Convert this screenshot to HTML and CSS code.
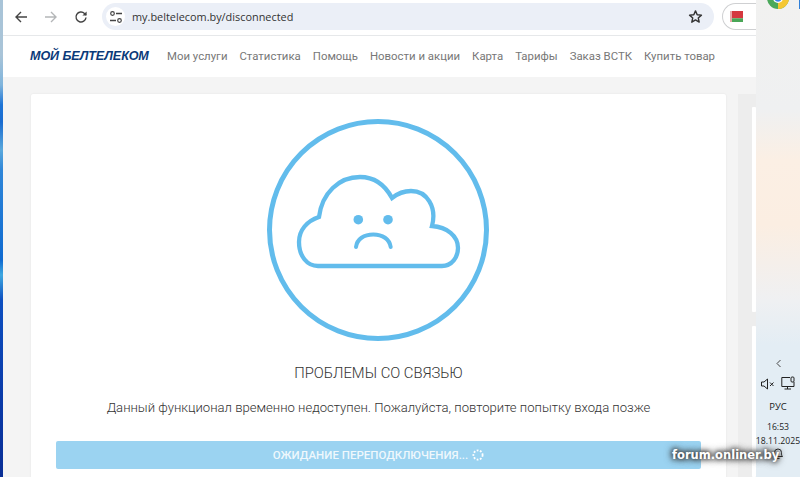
FILE: index.html
```html
<!DOCTYPE html>
<html lang="ru">
<head>
<meta charset="utf-8">
<title>Мой Белтелеком</title>
<link rel="stylesheet" href="styles.css">
</head>
<body>
<div class="screen">
  <div class="wallpaper"></div>
  <div class="browser">
    <div class="toolbar">
      <svg class="nav-icon first" width="16" height="16" viewBox="0 0 16 16"><path d="M14 8H3M8 3 3 8l5 5" fill="none" stroke="#444" stroke-width="1.4"/></svg>
      <svg class="nav-icon" width="16" height="16" viewBox="0 0 16 16"><path d="M2 8h11M8 3l5 5-5 5" fill="none" stroke="#b4b6b8" stroke-width="1.4"/></svg>
      <svg class="nav-icon" width="16" height="16" viewBox="0 0 16 16"><path d="M13 8.500A5 5 0 1 1 11.500 4.400L13 6" fill="none" stroke="#444" stroke-width="1.400"/><path d="M13.600 2.400v4.200H9.400z" fill="#444"/></svg>
      <div class="omnibox">
        <span class="tune">
          <svg width="14" height="14" viewBox="0 0 14 14"><circle cx="3.500" cy="3.500" r="1.800" fill="none" stroke="#444" stroke-width="1.200"/><path d="M7 3.500h6M1 10.500h6" stroke="#444" stroke-width="1.400"/><circle cx="10.500" cy="10.500" r="1.800" fill="none" stroke="#444" stroke-width="1.200"/></svg>
        </span>
        <span class="url">my.beltelecom.by/disconnected</span>
        <svg class="star" width="15" height="15" viewBox="0 0 24 24"><path d="M12 3l2.700 6.200 6.800.6-5.100 4.500 1.500 6.700L12 17.500 6.100 21l1.500-6.700-5.100-4.500 6.800-.6z" fill="none" stroke="#333" stroke-width="2.300" stroke-linejoin="round"/></svg>
      </div>
      <div class="profile">
        <svg width="13" height="11" viewBox="0 0 13 11"><rect width="13" height="7.300" fill="#d5383f"/><rect y="7.300" width="13" height="3.700" fill="#4aa657"/><rect width="2" height="11" fill="#e8a7a7"/></svg>
      </div>
    </div>
    <header class="site-header">
      <span class="logo">МОЙ БЕЛТЕЛЕКОМ</span>
      <nav class="site-nav">
        <span>Мои услуги</span><span>Статистика</span><span>Помощь</span><span>Новости и акции</span><span>Карта</span><span>Тарифы</span><span>Заказ ВСТК</span><span>Купить товар</span>
      </nav>
    </header>
    <main class="content">
      <section class="card">
        <svg class="cloud" width="222" height="222" viewBox="0 0 222 222">
          <circle cx="111" cy="111" r="108.500" fill="none" stroke="#62bcec" stroke-width="5"/>
          <path d="M51 147H175C185 147 191 138 191 129C191 117 180 108 165 107C170 88 160 72 144 72C137 72 130 75 125 79C118 66 107 58 93 58C72 58 55 74 52 98C40 102 32 111 32 123C32 137 40 147 51 147Z" fill="none" stroke="#62bcec" stroke-width="4.300" stroke-linejoin="miter"/>
          <circle cx="91.300" cy="100.700" r="4.800" fill="#62bcec"/>
          <circle cx="121" cy="100.700" r="4.800" fill="#62bcec"/>
          <path d="M89 128C90 120 97 115.500 106.300 115.500C115.500 115.500 122.500 120 123.700 128" fill="none" stroke="#62bcec" stroke-width="4" stroke-linecap="round"/>
        </svg>
        <h1 class="title">ПРОБЛЕМЫ СО СВЯЗЬЮ</h1>
        <p class="message">Данный функционал временно недоступен. Пожалуйста, повторите попытку входа позже</p>
        <div class="wait-btn">
          <span>ОЖИДАНИЕ ПЕРЕПОДКЛЮЧЕНИЯ...</span>
          <svg width="12" height="12" viewBox="0 0 12 12"><circle cx="6" cy="6" r="4.600" fill="none" stroke="#fff" stroke-width="1.800" stroke-dasharray="1.800 1.500"/></svg>
        </div>
      </section>
      <aside class="side-col">
        <div class="side-card one"></div>
        <div class="side-card two"></div>
      </aside>
    </main>
  </div>
  <aside class="taskbar">
    <svg class="chrome" width="22" height="22" viewBox="0 0 24 24"><circle cx="12" cy="12" r="12" fill="#4aa85a"/><path d="M12 24A12 12 0 0 0 22.400 6H12z" fill="#f5c732"/><circle cx="12" cy="12" r="5.500" fill="#fff"/><circle cx="12" cy="12" r="4" fill="#3b82ea"/></svg>
    <span class="edge-mark"></span>
    <div class="tray">
      <svg class="chev" width="7" height="9" viewBox="0 0 7 9"><path d="M5.500 1 2 4.500 5.500 8" fill="none" stroke="#444" stroke-width="1"/></svg>
      <div class="tray-icons">
        <svg width="14" height="12" viewBox="0 0 14 12"><path d="M.5 4h2.500L6.500 1v10L3 8H.5zM9 4.500l3.500 3.500M12.500 4.500 9 8" fill="none" stroke="#222" stroke-width="1"/></svg>
        <svg width="14" height="15" viewBox="0 0 14 15"><path d="M9 1.500H.8V10.500H13V6M3.500 13h6.500M6.500 10.500V13" fill="none" stroke="#222" stroke-width="1"/><rect x="10" y="1" width="3" height="5" rx="1" fill="none" stroke="#222"/></svg>
      </div>
      <div class="lang">РУС</div>
      <div class="clock">16:53<br>18.11.2025</div>
      <svg class="bell" width="12" height="13" viewBox="0 0 12 13"><path d="M1.500 9.500c1-1 1-2 1-4a3.500 3.500 0 0 1 7 0c0 2 0 3 1 4zM4.500 11.500h3" fill="none" stroke="#222"/></svg>
    </div>
  </aside>
  <div class="watermark">forum.onliner.by</div>
</div>
</body>
</html>
```

FILE: styles.css
```css
* { box-sizing: border-box; }
html, body { margin: 0; padding: 0; }
body { width: 800px; height: 477px; overflow: hidden; background: #fff; font-family: "Roboto", "Liberation Sans", sans-serif; }

.screen { position: relative; display: flex; width: 800px; height: 477px; overflow: hidden; }
.wallpaper { flex: none; width: 3px; background: linear-gradient(180deg, #a9c4d8 0, #a9c4d8 55px, #7fb4dc 85px, #1d74d6 105px, #1a6cd0 122px, #5aa8dc 150px, #2f86d8 170px, #0f6ad0 260px, #3fa8e0 275px, #0d4fc0 300px, #0a3aa8 400px, #0a2f96 477px); }
.browser { flex: none; width: 753px; display: flex; flex-direction: column; background: #f4f4f4; }

.toolbar { flex: none; height: 36px; display: flex; align-items: center; background: #fff; border-bottom: 1px solid #e6e8ea; padding: 0 0 2px 10px; }
.nav-icon { flex: none; margin-right: 14px; }
.omnibox { flex: none; width: 612px; height: 27px; margin-left: -1px; border-radius: 14px; background: #ebeff7; display: flex; align-items: center; padding: 0 11px 0 4px; }
.tune { flex: none; width: 19px; height: 19px; border-radius: 50%; background: #fff; display: flex; align-items: center; justify-content: center; }
.url { flex: 1; margin-left: 7px; font-family: "Open Sans", "Liberation Sans", sans-serif; font-size: 10.900px; color: #333; white-space: nowrap; }
.star { flex: none; }
.profile { flex: none; width: 34px; height: 27px; margin-left: 8px; border: 1px solid #cfd0d2; border-right: 0; border-radius: 14px 0 0 14px; display: flex; align-items: center; padding-left: 7px; }

.site-header { flex: none; height: 41px; display: flex; align-items: center; background: #fff; padding: 0 0 2px 27px; }
.logo { flex: none; width: 137px; font-family: "Liberation Sans", sans-serif; font-size: 12.600px; font-weight: bold; font-style: italic; color: #0b3a79; white-space: nowrap; letter-spacing: -.1px; }
.site-nav { display: flex; gap: 12px; font-size: 11.400px; color: #777; white-space: nowrap; }

.content { flex: 1; display: flex; align-items: flex-start; padding: 17px 0 0 28px; min-height: 0; }
.card { flex: none; width: 695px; height: 420px; background: #fff; border-radius: 2px; box-shadow: 0 0 2px rgba(0,0,0,.08); display: flex; flex-direction: column; align-items: center; padding: 25px 25px 0; }
.cloud { flex: none; margin-left: -2px; }
.title { margin: 22px 0 0; font-size: 14.800px; font-weight: 300; line-height: 20px; color: #333; }
.message { margin: 16px 0 0; font-size: 13.100px; font-weight: 300; line-height: 18px; color: #333; }
.wait-btn { align-self: stretch; margin-top: 24px; height: 28px; border-radius: 2px; background: #9bd3f1; color: rgba(255,255,255,.85); font-size: 11.500px; font-weight: 500; display: flex; align-items: center; justify-content: center; gap: 4px; }

.side-col { flex: none; width: 18px; margin-left: 12px; display: flex; flex-direction: column; background: #ededed; height: 383px; padding-left: 14px; }
.side-card { background: #fff; border-radius: 1px; }
.side-card.one { height: 205px; margin-top: 13px; }
.side-card.two { flex: 1; margin-top: 14px; }

.taskbar { flex: none; width: 44px; position: relative; background: linear-gradient(180deg, #f1f1f0 0, #eff0f1 110px, #fbefe4 160px, #fbeee2 225px, #eff0f2 300px, #e3edf4 345px, #e3edf4 477px); }
.chrome { position: absolute; left: 11px; top: -13px; }
.edge-mark { position: absolute; right: 0; top: 0; width: 1px; height: 9px; background: #2f7fd8; }
.tray { position: absolute; left: 0; right: 0; top: 326px; bottom: 0; display: flex; flex-direction: column; align-items: center; padding-top: 33px; color: #222; font-family: "Open Sans", "Liberation Sans", sans-serif; font-size: 8.700px; }
.chev { flex: none; }
.tray-icons { display: flex; gap: 6px; margin-top: 8px; align-items: center; }
.lang { margin-top: 9px; font-size: 9.500px; }
.clock { margin-top: 7px; text-align: center; line-height: 14px; white-space: nowrap; }
.bell { margin-top: -1px; }

.watermark { position: absolute; left: 672px; top: 448px; font-family: "DejaVu Sans", sans-serif; font-size: 11.500px; font-weight: bold; color: #fff; text-shadow: 0 0 4px #333, 0 0 6px #333, 0 0 8px #555; white-space: nowrap; }
```
